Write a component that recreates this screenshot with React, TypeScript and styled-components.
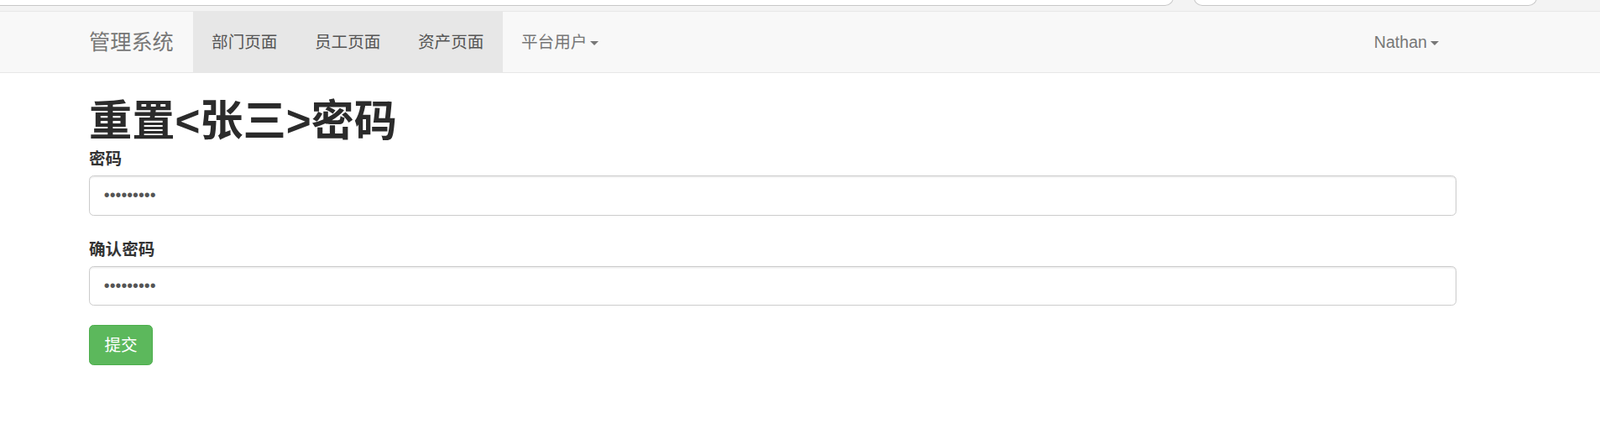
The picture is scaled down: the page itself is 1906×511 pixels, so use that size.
import React from "react"
import styled, { createGlobalStyle } from "styled-components"

const GlobalStyle = createGlobalStyle`
  html, body {
    margin: 0;
    padding: 0;
    background: #fff;
  }
  body {
    font-family: "Liberation Sans", "Noto Sans CJK SC", sans-serif;
    font-size: 19.6px;
    line-height: 28px;
    color: #333;
  }
  * {
    box-sizing: border-box;
  }
`

const navLinks = [
  { label: "部门页面", active: true },
  { label: "员工页面", active: true },
  { label: "资产页面", active: true },
  { label: "平台用户", active: false, dropdown: true },
]

const App: React.FC = () => {
  return (
    <>
      <GlobalStyle />
      <S.Chrome>
        <S.TabRow>
          <S.AddressBox />
          <S.SearchBox />
        </S.TabRow>
      </S.Chrome>

      <S.Navbar>
        <S.Container>
          <S.NavInner>
            <S.Brand>管理系统</S.Brand>
            {navLinks.map((link) => (
              <S.NavItem key={link.label} active={link.active}>
                {link.label}
                {link.dropdown && <S.Caret />}
              </S.NavItem>
            ))}
            <S.RightItem>
              Nathan
              <S.Caret />
            </S.RightItem>
          </S.NavInner>
        </S.Container>
      </S.Navbar>

      <S.Container>
        <S.Title>重置&lt;张三&gt;密码</S.Title>
        <form onSubmit={(e) => e.preventDefault()}>
          <S.FormGroup>
            <S.Label htmlFor="pwd">密码</S.Label>
            <S.Input id="pwd" type="password" defaultValue="123456789" />
          </S.FormGroup>
          <S.FormGroup>
            <S.Label htmlFor="pwd2">确认密码</S.Label>
            <S.Input id="pwd2" type="password" defaultValue="123456789" />
          </S.FormGroup>
          <S.SubmitButton type="submit">提交</S.SubmitButton>
        </form>
      </S.Container>
    </>
  )
}

export default App

const S = {
  Chrome: styled.div`
    height: 13px;
    background: #f3f3f3;
  `,
  TabRow: styled.div`
    display: flex;
    align-items: flex-end;
    height: 7px;
    overflow: hidden;
    gap: 24px;
  `,
  AddressBox: styled.div`
    flex: 0 0 1418px;
    margin-left: -20px;
    height: 24px;
    background: #fff;
    border: 1px solid #c8c8c8;
    border-top: none;
    border-radius: 0 0 10px 10px;
  `,
  SearchBox: styled.div`
    flex: 0 0 409px;
    height: 24px;
    background: #fff;
    border: 1px solid #c8c8c8;
    border-top: none;
    border-radius: 0 0 10px 10px;
  `,
  Navbar: styled.nav`
    background: #f8f8f8;
    border-top: 1px solid #e7e7e7;
    border-bottom: 1px solid #e7e7e7;
  `,
  Container: styled.div`
    width: 1671px;
    margin-left: 85px;
    padding: 0 21px;
  `,
  NavInner: styled.div`
    display: flex;
    align-items: stretch;
    height: 72px;
  `,
  Brand: styled.div`
    display: flex;
    align-items: center;
    padding-right: 23px;
    font-size: 25.2px;
    color: #777;
  `,
  NavItem: styled.div<{ active?: boolean }>`
    display: flex;
    align-items: center;
    padding: 0 22.3px;
    color: ${(p) => (p.active ? "#555" : "#777")};
    background: ${(p) => (p.active ? "#e7e7e7" : "transparent")};
  `,
  RightItem: styled.div`
    display: flex;
    align-items: center;
    margin-left: auto;
    padding: 0 21px;
    color: #777;
  `,
  Caret: styled.span`
    display: inline-block;
    width: 0;
    height: 0;
    margin-left: 4px;
    margin-top: 2px;
    border-top: 5.6px solid #777;
    border-left: 5.6px solid transparent;
    border-right: 5.6px solid transparent;
  `,
  Title: styled.h1`
    margin: 30px 0 0;
    font-size: 51.2px;
    line-height: 56px;
    font-weight: 700;
    color: #2b2b2b;
  `,
  FormGroup: styled.div`
    margin-top: 2px;
    & + & {
      margin-top: 26px;
    }
  `,
  Label: styled.label`
    display: block;
    margin-bottom: 6px;
    font-weight: 700;
    line-height: 28px;
    color: #333;
  `,
  Input: styled.input`
    display: block;
    width: 100%;
    height: 47.6px;
    padding: 8.4px 16.8px;
    font-family: "Liberation Sans", "Noto Sans CJK SC", sans-serif;
    font-size: 19.6px;
    color: #555;
    background: #fff;
    border: 1.4px solid #ccc;
    border-radius: 5.6px;
    box-shadow: inset 0 1.4px 1.4px rgba(0, 0, 0, 0.075);
    outline: none;
  `,
  SubmitButton: styled.button`
    display: inline-block;
    margin-top: 23px;
    padding: 9px 17.5px;
    font-family: "Liberation Sans", "Noto Sans CJK SC", sans-serif;
    font-size: 19.6px;
    line-height: 28px;
    color: #fff;
    background: #5cb85c;
    border: 1.4px solid #4cae4c;
    border-radius: 5.6px;
    cursor: pointer;
  `,
}
